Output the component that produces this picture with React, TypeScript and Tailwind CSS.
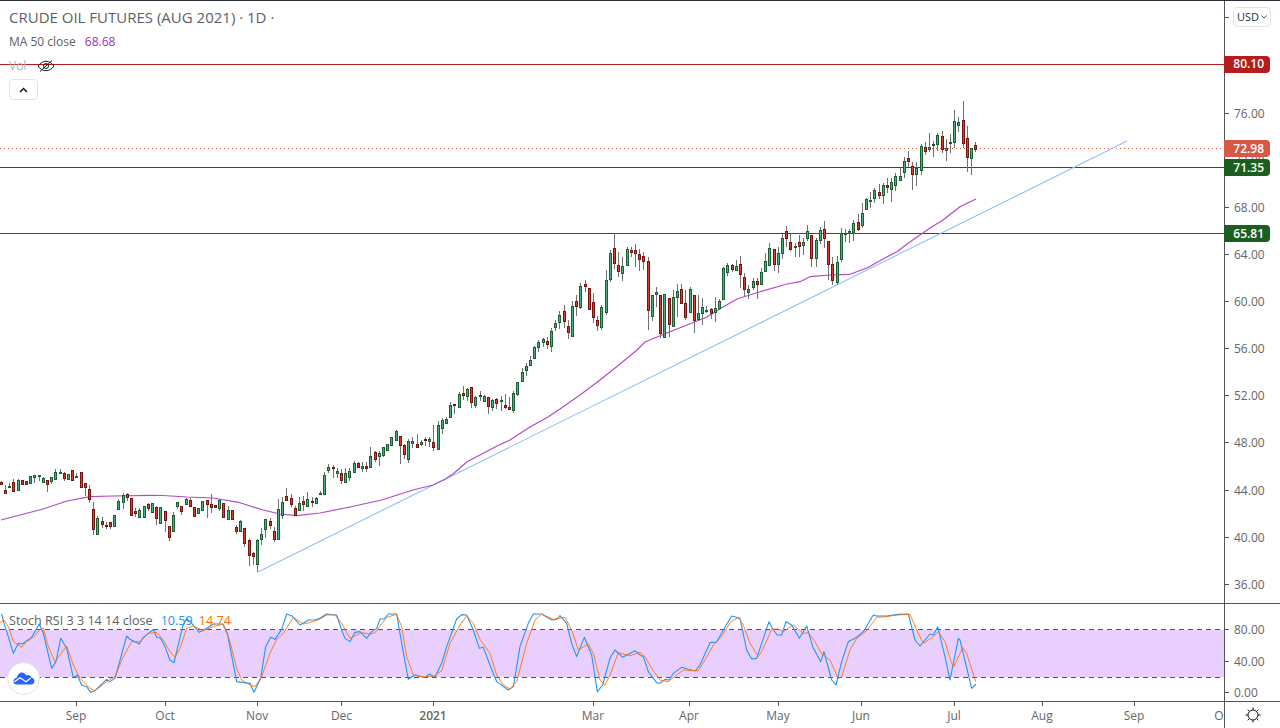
import React from 'react';

type Row = [number, number, number, number, 'g' | 'r'];

const font = { fontFamily: '"Open Sans", sans-serif' };

// candle rows read as [bodyTop, bodyBottom, wickHigh, wickLow], offset + y/3 gives the page y
const seg1: Row[] = [
  [126,131,124,134,'r'],[151,158,135,158,'r'],[138,142,130,145,'g'],[127,152,117,152,'r'],[121,149,117,150,'g'],
  [121,131,121,131,'r'],[124,131,122,133,'r'],[109,128,108,131,'g'],[106,110,106,128,'g'],[106,109,106,122,'g'],
  [115,125,112,127,'g'],[121,131,120,155,'r'],[112,122,110,131,'g'],[97,116,87,117,'g'],[97,100,88,102,'g'],
  [100,113,97,124,'r'],[103,118,102,120,'g'],[91,121,90,122,'r'],[108,111,98,115,'g'],[97,140,97,144,'r'],
  [130,140,128,167,'r'],[148,178,135,188,'r'],[208,266,186,284,'r'],[235,281,229,281,'g'],[244,251,232,264,'r'],
  [256,258,245,266,'r'],[247,257,245,268,'r'],[226,257,226,257,'g'],[183,208,178,209,'g'],[166,185,160,206,'g'],
  [163,170,158,182,'r'],[175,224,175,224,'r'],[214,218,204,232,'r'],[210,230,205,231,'g'],[199,230,198,230,'g'],
  [193,203,190,212,'r'],[190,215,190,215,'g'],[202,233,199,255,'r'],[202,248,200,248,'g'],[214,241,212,275,'r'],
  [259,292,259,302,'r'],[226,272,216,275,'g'],[187,197,187,206,'g'],[199,212,199,224,'r'],[178,193,174,195,'g'],
  [181,197,175,197,'r'],[202,227,200,230,'r'],[205,220,203,222,'g'],[184,209,184,211,'g'],[181,193,180,234,'r'],
  [193,200,162,218,'r'],[196,200,195,204,'r'],[179,203,177,212,'g'],[190,230,190,232,'r'],[211,238,198,239,'g'],
  [211,238,209,240,'r'],[260,274,254,281,'r'],[244,272,240,276,'g'],[265,308,265,320,'r'],[301,344,298,378,'r'],
  [340,347,337,375,'r'],[301,373,297,397,'g'],[283,298,265,314,'g'],[238,268,236,293,'g'],[244,254,235,267,'r'],
  [274,298,262,305,'r'],[208,296,178,297,'g'],[187,224,172,236,'g'],[169,179,144,183,'r'],[175,191,163,201,'r'],
  [205,224,197,225,'r'],[190,209,170,211,'g'],[184,191,168,212,'r'],[178,199,156,202,'g'],[184,187,172,200,'r'],
  [175,190,172,192,'g'],
];

const seg2: Row[] = [
  [518,521,514,524,'g'],[466,523,456,524,'g'],[441,450,433,460,'g'],[441,443,435,473,'r'],[453,458,445,473,'g'],
  [460,479,447,491,'r'],[460,485,445,490,'g'],[454,470,445,483,'g'],[430,455,422,455,'g'],[430,440,425,445,'r'],
  [438,443,425,456,'g'],[438,443,425,456,'r'],[409,440,381,442,'g'],[397,416,392,425,'r'],[400,407,392,437,'g'],
  [382,404,380,410,'g'],[373,389,371,392,'g'],[352,374,350,375,'g'],[334,359,330,360,'g'],[349,374,349,432,'r'],
  [376,401,373,416,'r'],[364,416,356,429,'g'],[364,368,350,384,'g'],[373,380,341,380,'r'],[366,372,360,378,'g'],
  [358,360,350,378,'r'],[358,362,352,380,'g'],[367,381,316,392,'r'],[316,388,303,390,'g'],[300,323,295,342,'g'],
  [298,308,290,310,'g'],[256,290,247,292,'g'],[253,254,253,282,'r'],[223,260,216,262,'g'],[220,224,197,240,'r'],
  [208,227,203,244,'g'],[202,245,202,264,'r'],[232,254,228,265,'g'],[226,228,213,242,'g'],[229,242,224,244,'g'],
  [232,257,232,281,'r'],[241,260,238,273,'g'],[238,248,235,268,'r'],[240,242,228,272,'g'],[256,260,222,266,'r'],
  [262,266,232,266,'r'],[220,269,214,278,'g'],[187,223,187,227,'g'],[157,182,144,184,'g'],[139,149,128,167,'g'],
  [121,134,109,135,'g'],[82,115,78,117,'g'],[67,80,60,97,'g'],[58,65,55,80,'g'],[64,71,52,88,'r'],
  [34,79,24,96,'g'],[10,20,0,32,'g'],
];

const seg3: Row[] = [
  [286,305,272,326,'g'],[274,302,255,325,'r'],[319,335,300,356,'r'],[259,347,243,347,'g'],[244,258,226,287,'r'],
  [199,262,189,267,'g'],[193,197,180,215,'r'],[205,266,205,270,'r'],[247,290,220,310,'r'],[301,314,289,332,'r'],
  [262,320,256,330,'g'],[181,275,151,284,'g'],[100,176,90,186,'g'],[85,130,40,148,'r'],[136,154,96,172,'r'],
  [139,158,112,182,'g'],[88,134,82,137,'g'],[91,97,82,110,'r'],[91,100,72,140,'r'],[103,116,88,152,'r'],
  [109,122,97,150,'r'],[124,271,112,329,'r'],[226,287,226,302,'g'],[217,223,200,260,'g'],[226,338,224,355,'r'],
  [223,352,222,352,'g'],[235,313,235,350,'r'],[232,319,211,320,'g'],[214,232,192,290,'g'],[208,248,192,248,'r'],
  [250,292,210,300,'r'],[208,277,202,280,'g'],[226,301,226,338,'r'],[278,298,226,300,'g'],[262,278,235,316,'g'],
  [271,272,258,280,'g'],[268,280,265,298,'r'],[265,277,232,305,'g'],[244,265,238,270,'g'],[145,236,140,240,'g'],
];

const seg4: Row[] = [
  [376,397,370,408,'g'],[376,386,372,396,'r'],[379,391,360,394,'g'],[373,403,349,445,'r'],[412,448,398,468,'r'],
  [448,457,436,476,'g'],[424,440,415,450,'g'],[424,431,415,476,'r'],[397,431,385,432,'g'],[364,394,340,396,'g'],
  [325,374,310,375,'g'],[328,373,328,392,'r'],[340,373,322,400,'g'],[295,340,282,356,'g'],[274,295,258,320,'r'],
  [307,328,282,333,'r'],[319,320,310,352,'g'],[307,317,286,352,'r'],[305,316,295,345,'g'],[274,295,255,302,'g'],
  [286,355,285,380,'r'],[301,355,295,380,'g'],[271,301,262,312,'g'],[268,295,243,325,'r'],[304,373,304,420,'r'],
  [373,421,350,435,'r'],[367,425,347,435,'g'],[280,358,265,365,'g'],[280,281,266,305,'g'],[274,280,266,308,'g'],
  [250,275,240,302,'g'],[247,268,222,272,'r'],[220,256,190,265,'g'],[178,208,175,210,'g'],[181,182,155,204,'g'],
  [151,175,145,190,'g'],[157,166,132,178,'r'],
];

const seg5: Row[] = [
  [286,314,278,342,'g'],[286,290,265,310,'r'],[277,296,265,335,'g'],[259,284,250,302,'g'],[259,269,235,270,'g'],
  [214,247,200,264,'g'],[205,212,183,232,'r'],[229,253,215,300,'r'],[235,253,217,288,'g'],[169,241,162,254,'g'],
  [172,182,157,195,'r'],[172,178,129,185,'g'],[162,164,153,200,'g'],[136,163,130,182,'g'],[139,178,124,188,'r'],
  [175,181,147,212,'g'],[156,158,132,188,'g'],[94,157,60,175,'g'],[97,104,82,125,'g'],[91,160,33,175,'r'],
  [145,202,108,246,'r'],[175,205,175,254,'g'],[166,176,157,185,'r'],
];

const toPage = (base: number, rows: Row[]) =>
  rows.map(([t, b, h, l, c]) => ({ t: base + t / 3, b: base + b / 3, h: base + h / 3, l: base + l / 3, c }));

const candles = [
  ...toPage(440, seg1),
  ...toPage(320, seg2),
  ...toPage(220, seg3),
  ...toPage(140, seg4),
  ...toPage(90, seg5),
];

const ma = '1,520 43,509 67,501 90,496.7 113,496 150,495.3 163,495.5 187,497 213,498 240,502.7 263,510 280,514 297,515.7 320,513 350,507 381.7,500 413,490 433,485 445,479.3 453,474 467,461.7 480,455 497,446 510,440 530,427 548,417 560,409 580,395 600,380 620,364 637,350 645,342 660,335.7 687,325 707,317 723,307 737,299 760,291.7 787,284 800,281.7 810,276.7 830,275 850,274.3 867,268 883,259 897,251.7 907,244 920,235 930,228 943,220 960,206.7 976,199';

const zoomPts = (off: number, pts: number[][]) => pts.map(([x, y]) => `${off + x / 3},${600 + y / 3}`).join(' ');

const blue = [
  zoomPts(0, [[5,42],[12,70],[25,110],[40,160],[55,130],[68,132],[80,122],[95,112],[118,72],[130,100],[155,205],[168,185],[182,115],[200,145],[220,233],[232,225],[245,255],[260,260],[272,277],[285,272],[320,238],[330,245],[345,235],[380,108],[390,118],[418,132],[430,112],[460,88],[470,112],[482,115],[495,140],[510,180],[522,188],[548,80],[560,55],[575,70],[598,97],[620,85],[640,72],[668,72],[682,100],[710,245],[750,250],[762,277],[782,235],[797,140],[812,112],[825,118],[845,88],[860,42],[875,47],[900,75],[925,60],[945,60],[960,55]]),
  zoomPts(320, [[20,42],[50,45],[65,90],[75,115],[90,125],[105,97],[120,95],[140,115],[155,95],[170,85],[180,57],[192,57],[205,42],[230,42],[245,130],[265,238],[285,225],[315,233],[328,222],[345,232],[365,190],[380,140],[410,57],[425,44],[440,45],[460,90],[478,145],[490,142],[510,195],[530,245],[565,270],[580,260],[600,140],[625,70],[640,42],[665,42],[695,60],[710,58],[720,47],[740,70],[755,130],[770,170],[793,112],[815,165],[832,275],[848,255],[870,175],[885,150],[908,172],[945,152],[960,165]]),
  zoomPts(640, [[10,170],[25,215],[50,248],[60,250],[75,238],[88,240],[100,220],[125,202],[145,208],[165,213],[180,195],[210,128],[230,126],[250,90],[275,48],[300,55],[320,150],[335,177],[350,175],[365,130],[387,65],[400,90],[412,105],[425,105],[438,65],[455,75],[478,115],[500,78],[518,140],[542,185],[552,155],[575,240],[588,255],[605,185],[625,125],[650,112],[670,95],[700,45],[710,48],[740,48],[775,43],[805,42],[825,120],[840,138],[870,102],[880,105],[893,80],[915,170],[930,240],[955,115],[960,120]]),
  zoomPts(960, [[12,170],[35,265],[48,252]]),
].join(' ');

const orange = [
  zoomPts(0, [[0,68],[12,60],[25,80],[40,125],[65,142],[80,125],[100,112],[120,88],[130,85],[145,140],[165,185],[180,165],[200,138],[220,195],[240,235],[270,265],[285,272],[320,245],[345,230],[370,170],[395,125],[420,125],[445,100],[470,97],[490,120],[510,155],[525,172],[540,145],[560,85],[580,78],[610,92],[640,80],[670,72],[690,125],[710,205],[725,240],[745,252],[765,260],[785,230],[810,160],[830,118],[850,100],[880,52],[910,72],[940,65],[960,57]]),
  zoomPts(320, [[20,45],[45,45],[65,70],[90,115],[125,98],[150,102],[165,98],[200,52],[230,43],[245,80],[260,170],[280,225],[300,230],[340,230],[365,212],[390,130],[420,75],[440,47],[460,70],[480,118],[510,160],[530,225],[550,255],[570,267],[590,245],[620,130],[645,60],[665,43],[700,58],[735,52],[755,90],[775,150],[805,132],[820,160],[840,240],[855,255],[870,225],[895,158],[930,167],[960,157]]),
  zoomPts(640, [[15,170],[35,205],[60,240],[85,245],[110,225],[130,210],[175,212],[195,180],[220,135],[245,110],[270,68],[295,52],[310,75],[330,130],[355,170],[370,145],[395,87],[415,87],[430,95],[460,75],[490,100],[505,98],[525,125],[545,162],[570,180],[595,235],[605,230],[630,150],[650,115],[680,92],[710,52],[740,50],[770,45],[810,43],[830,90],[850,130],[880,110],[895,95],[915,125],[935,190],[942,200],[960,160]]),
  zoomPts(960, [[8,143],[20,160],[47,245]]),
].join(' ');

const priceTicks = [
  { y: 113, label: '76.00' },
  { y: 160, label: '72.00' },
  { y: 207, label: '68.00' },
  { y: 254, label: '64.00' },
  { y: 301, label: '60.00' },
  { y: 348.5, label: '56.00' },
  { y: 395, label: '52.00' },
  { y: 442.5, label: '48.00' },
  { y: 490, label: '44.00' },
  { y: 537, label: '40.00' },
  { y: 584.5, label: '36.00' },
];

const badges = [
  { y: 64, label: '80.10', bg: '#b71c1c' },
  { y: 148.5, label: '72.98', bg: '#d95745' },
  { y: 167.5, label: '71.35', bg: '#1b5e20' },
  { y: 233.5, label: '65.81', bg: '#1b5e20' },
];

const months = [
  { x: 76, label: 'Sep' },
  { x: 165, label: 'Oct' },
  { x: 257, label: 'Nov' },
  { x: 341.5, label: 'Dec' },
  { x: 433, label: '2021', bold: true },
  { x: 593, label: 'Mar' },
  { x: 689, label: 'Apr' },
  { x: 778, label: 'May' },
  { x: 861, label: 'Jun' },
  { x: 954, label: 'Jul' },
  { x: 1042, label: 'Aug' },
  { x: 1134, label: 'Sep' },
  { x: 1224, label: 'Oct' },
];

function Candles() {
  return (
    <g shapeRendering="crispEdges">
      {candles.map((c, i) => {
        const x = Math.round(1.33 + 4.2 * i - 0.5);
        const top = Math.round(c.t);
        const h = Math.max(Math.round(c.b) - top, 1);
        return (
          <g key={i}>
            <rect x={x} y={Math.round(c.h)} width={1} height={Math.max(Math.round(c.l) - Math.round(c.h), 1)} fill="#707070" />
            <rect x={x - 1} y={top} width={3} height={h + 1} fill={c.c === 'g' ? '#1b5e35' : '#74150f'} />
            {h > 1 && <rect x={x} y={top + 1} width={1} height={h - 1} fill={c.c === 'g' ? '#4caf7f' : '#e03a2a'} />}
          </g>
        );
      })}
    </g>
  );
}

function MainPane() {
  return (
    <svg className="block w-[1224px] h-[602px]" viewBox="0 1 1224 602">
      <line x1={0} x2={1224} y1={64.5} y2={64.5} stroke="#b71c1c" />
      <line x1={0} x2={1224} y1={148.5} y2={148.5} stroke="#d95745" strokeDasharray="1 3" />
      <line x1={0} x2={1224} y1={167.5} y2={167.5} stroke="#1b5e20" />
      <line x1={0} x2={1224} y1={233.5} y2={233.5} stroke="#1b5e20" />
      <line x1={258} y1={572} x2={1127} y2={141} stroke="#90bff9" strokeWidth={1.1} />
      <polyline points={ma} fill="none" stroke="#b04cc4" strokeWidth={1.2} strokeLinejoin="round" />
      <Candles />
    </svg>
  );
}

function StochPane() {
  return (
    <svg className="block w-[1224px] h-[97px]" viewBox="0 604 1224 97">
      <rect x={0} y={630} width={1224} height={47} fill="#e9cffd" />
      <line x1={0} x2={1224} y1={629.5} y2={629.5} stroke="#555" strokeDasharray="5 4" />
      <line x1={0} x2={1224} y1={677.5} y2={677.5} stroke="#555" strokeDasharray="5 4" />
      <polyline points={blue} fill="none" stroke="#2196f3" strokeWidth={1.1} strokeLinejoin="round" />
      <polyline points={orange} fill="none" stroke="#ff6d00" strokeWidth={1} strokeLinejoin="round" opacity={0.85} />
    </svg>
  );
}

function PriceAxis() {
  return (
    <svg className="block w-[55px] h-[602px]" viewBox="1225 1 55 602" style={font}>
      <line x1={1225} x2={1229} y1={17.5} y2={17.5} stroke="#50535e" />
      {priceTicks.map((t) => (
        <g key={t.label}>
          <line x1={1225} x2={1229} y1={Math.floor(t.y) + 0.5} y2={Math.floor(t.y) + 0.5} stroke="#50535e" />
          <text x={1234} y={t.y + 4.5} fontSize={12} fill="#666">{t.label}</text>
        </g>
      ))}
    </svg>
  );
}

function StochAxis() {
  return (
    <svg className="block w-[55px] h-[97px]" viewBox="1225 604 55 97" style={font}>
      {[[629.5, '80.00'], [661, '40.00'], [692.5, '0.00']].map(([y, label]) => (
        <g key={label}>
          <line x1={1225} x2={1229} y1={Math.floor(Number(y)) + 0.5} y2={Math.floor(Number(y)) + 0.5} stroke="#50535e" />
          <text x={1234} y={Number(y) + 4.5} fontSize={12} fill="#666">{label}</text>
        </g>
      ))}
    </svg>
  );
}

function TimeAxis() {
  return (
    <svg className="block w-[1224px] h-[26px]" viewBox="0 702 1224 26" style={font}>
      {months.map((m) => (
        <g key={m.x}>
          <line x1={Math.floor(m.x) + 0.5} x2={Math.floor(m.x) + 0.5} y1={702} y2={706} stroke="#50535e" />
          <text x={m.x} y={719.5} fontSize={12} textAnchor="middle" fontWeight={m.bold ? 600 : 400} fill="#666">{m.label}</text>
        </g>
      ))}
    </svg>
  );
}

function EyeOff() {
  return (
    <svg width="18" height="14" viewBox="0 0 18 14" fill="none" stroke="#1c1c1c" strokeWidth="1">
      <path d="M1 7c2-3 5-4.700 8-4.700S15 4 17 7c-2 3-5 4.700-8 4.700S3 10 1 7z" />
      <circle cx="9" cy="7" r="2.500" />
      <path d="M3 12.500L15 1.500" />
    </svg>
  );
}

function SettingsIcon() {
  return (
    <svg width="16" height="16" viewBox="0 0 16 16" fill="none" stroke="#131722" strokeWidth="1">
      <circle cx="8" cy="8" r="5" />
      <path d="M8 0.500v2.500M8 13v2.500M0.500 8h2.500M13 8h2.500M2.700 2.700l1.800 1.800M11.500 11.500l1.800 1.800M13.300 2.700l-1.800 1.800M4.500 11.500l-1.800 1.800" />
    </svg>
  );
}

function Logo() {
  return (
    <div className="absolute left-[7px] top-[661px] flex h-[33px] w-[33px] items-center justify-center rounded-full border border-[#e0e3eb] bg-white">
      <svg width="22" height="13" viewBox="0 0 22 13">
        <path d="M0.500 9.500C0.500 7.500 1.800 6.200 3.500 6C4.800 2.500 6.500 0.500 8.800 0.500C11 0.500 12.200 2.500 13.800 3.400C15.500 2.600 17.500 3.600 18.200 5.500C20.300 5.700 21.500 7.500 21.500 9.300C21.500 11.300 20 12.500 18.300 12.500H3.500C1.800 12.500 0.500 11.300 0.500 9.500Z" fill="#2962ff" />
        <path d="M1.500 9.800L7 5.800L13 9.800L17.500 6.300" fill="none" stroke="#fff" strokeWidth="1.300" />
      </svg>
    </div>
  );
}

export default function App() {
  return (
    <div className="relative flex h-[728px] w-[1280px] flex-col overflow-hidden bg-white border-t border-[#2a2e39]" style={font}>
      <div className="flex h-[603px] border-b border-[#50535e]">
        <MainPane />
        <div className="border-l border-[#50535e]">
          <PriceAxis />
        </div>
      </div>
      <div className="flex h-[98px] border-b border-[#50535e]">
        <StochPane />
        <div className="border-l border-[#50535e]">
          <StochAxis />
        </div>
      </div>
      <div className="flex h-[26px]">
        <TimeAxis />
        <div className="flex flex-1 items-center justify-center border-l border-[#50535e]">
          <SettingsIcon />
        </div>
      </div>

      {/* chart legends */}
      <div className="absolute left-[9px] top-[7px] text-[15px] leading-[18px] whitespace-nowrap text-[#5d5f66]">
        CRUDE OIL FUTURES (AUG 2021) · 1D ·
      </div>
      <div className="absolute left-[9px] top-[32px] flex gap-[9px] text-[12px] leading-[18px] whitespace-nowrap text-[#5d5f66]">
        <span>MA 50 close</span>
        <span className="text-[#a72ec0]">68.68</span>
      </div>
      <div className="absolute left-[9px] top-[56px] flex items-center gap-[11px] text-[12px] leading-[18px] text-[#b2b5be]">
        <span>Vol</span>
        <EyeOff />
      </div>
      <button className="absolute left-[9px] top-[78px] flex h-[21px] w-[29px] items-center justify-center rounded border border-[#e0e3eb] bg-white">
        <svg width="9" height="6" viewBox="0 0 9 6" fill="none" stroke="#131722" strokeWidth="1.500">
          <path d="M1 5L4.500 1.500L8 5" />
        </svg>
      </button>
      <div className="absolute left-[9px] top-[611px] flex text-[12.6px] leading-[18px] whitespace-nowrap text-[#5d5f66]">
        <span className="mr-2">Stoch RSI 3 3 14 14 close</span>
        <span className="mr-[6px] text-[#2196f3]">10.59</span>
        <span className="text-[#ff6d00]">14.74</span>
      </div>
      <Logo />

      {/* currency button and price badges */}
      <div className="absolute left-[1233px] top-[6px] flex h-[20px] w-[38px] items-center justify-center gap-[2px] rounded border border-[#e0e3eb] bg-white text-[11px] text-[#2a2e39]">
        <span>USD</span>
        <svg width="6" height="4" viewBox="0 0 6 4" fill="none" stroke="#50535e">
          <path d="M0.500 0.500L3 3L5.500 0.500" />
        </svg>
      </div>
      {badges.map((b) => (
        <div
          key={b.label}
          className="absolute left-[1224px] flex h-[17px] w-[46px] items-center justify-end rounded-r-sm pr-[6px] text-[12px] font-semibold text-white"
          style={{ top: b.y - 9.5, backgroundColor: b.bg }}
        >
          {b.label}
        </div>
      ))}
    </div>
  );
}
